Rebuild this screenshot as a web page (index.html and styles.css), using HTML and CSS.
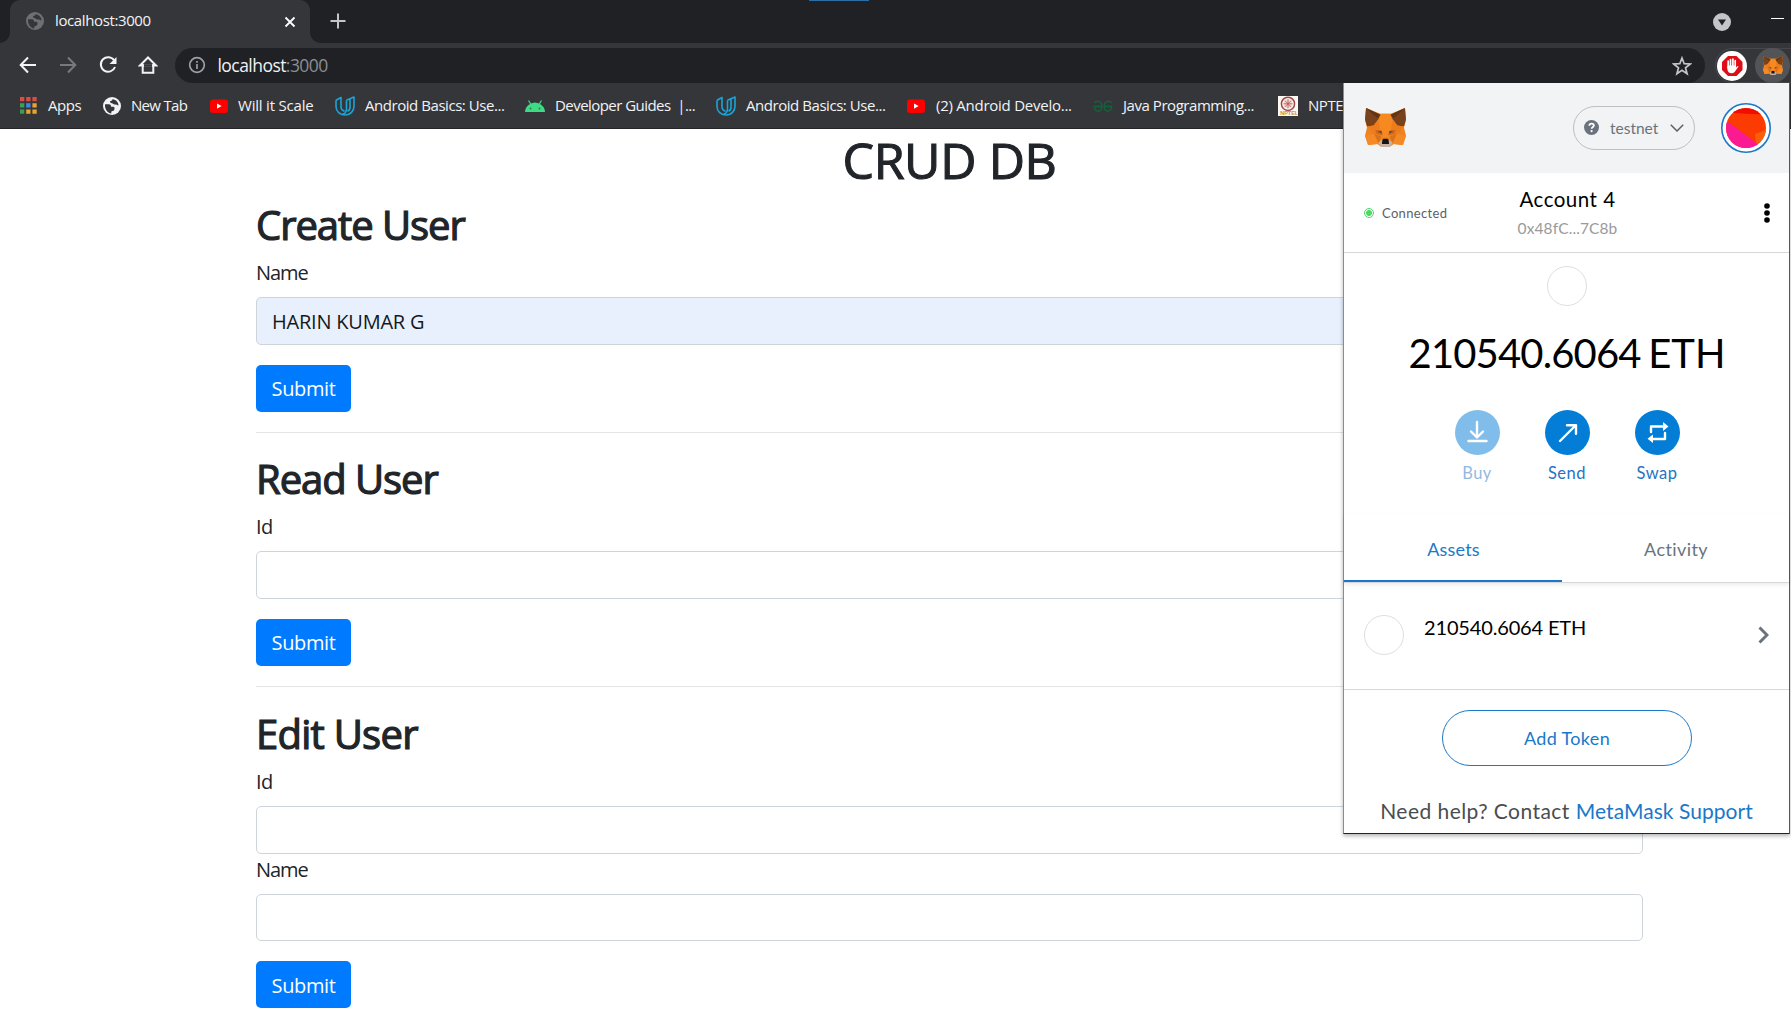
FILE: index.html
```html
<!DOCTYPE html>
<html lang="en">
<head>
<meta charset="utf-8">
<title>localhost:3000</title>
<link rel="stylesheet" href="styles.css">
</head>
<body>
<svg class="defs" aria-hidden="true">
  <symbol id="globe" viewBox="0 0 20 20">
    <circle cx="10" cy="10" r="9" fill="currentColor"/>
    <path class="globe-land" d="M3 8.3h3.7c2 .1 2.4 1.2 2.3 2.4h2.500c1 .1 1.200 1 .9 2.600-.3 1.500-1.400 1.800-2.800 2-.3.900-.400 1.500-.300 2.200C5.500 17 2.600 13.500 3 8.300zM10.500 3.200c-.4 1.500-1.500 1.600-2.500 2 .1 1.200.6 1.900 1.900 2.100 1 .3 2 1.400 3.300 1.300 1.200-.1 1.800.7 3.300.8-.1-2.900-2.100-5.900-6-6.200z"/>
  </symbol>
  <symbol id="youtube" viewBox="0 0 20 20">
    <rect x="1" y="3.500" width="18" height="13.500" rx="3" fill="#f00"/>
    <path d="M8 7.500v5.200l4.600-2.600z" fill="#fff"/>
  </symbol>
  <symbol id="udacity" viewBox="0 0 20 20">
    <path d="M1 4.300 6 1.500v9c0 2.500 1.300 4 3.600 4.700M11.500 4.300 19 1v9c0 5-3.700 9-8.500 9C5 19 1 15.500 1 10.500V4.300M11.500 4.300v8.500c0 3-1.500 5.500-4 5.300M15 2.800v8.500c0 2-.8 3.300-2.500 4" fill="none" stroke="#1aa5d8" stroke-width="1.600" stroke-linejoin="round"/>
  </symbol>
  <symbol id="fox" viewBox="0 0 40 38">
    <path d="M1 0 15 5.500h10L39 0l1 12-2 7 2 8-3 9-9-1-4 3h-8l-4-3-9 1-3-9 2-8-2-7z" fill="#ee8420"/>
    <path d="M15 5.500h10l3 12-4 11h-8l-4-11z" fill="#f6891f"/>
    <path d="M1 0 15 6.500 13 11 8.500 17 2 18 0 11zM39 0 25 6.500 27 11l4.500 6 6.500 1 2-7z" fill="#7a421b"/>
    <path d="M1 0 15 6.500 12 10zM39 0 25 6.500 28 10z" fill="#5f3418"/>
    <path d="M8.500 17 13 11l3 17-7-2-7-8zM31.500 17 27 11l-3 17 7-2 7-8z" fill="#ed7c1d"/>
    <path d="M0 27 9 25l4 9-1 1-9 1zM40 27l-9-2-4 9 1 1 9 1z" fill="#f58a24"/>
    <path d="m9 25 7 3-3 6zM31 25l-7 3 3 6z" fill="#dc711c"/>
    <path d="M10 21.500l6 .5 1.500 4.500-6-1.500zM30 21.500l-6 .5-1.500 4.500 6-1.500z" fill="#c9691f"/>
    <path d="m12.500 23 3.500-.5.500 2.300zM27.500 23l-3.500-.5-.5 2.300z" fill="#4b4743"/>
    <path d="m13 34 4-3.500h6l4 3.500-3 4h-8z" fill="#c5b3a6"/>
    <path d="m17 31 1-1h4l1 1 .5 4h-7z" fill="#161616"/>
  </symbol>
</svg>

<header class="browser">
  <div class="tabstrip">
    <div class="tab">
      <svg class="tab-icon"><use href="#globe"/></svg>
      <span class="tab-title">localhost:3000</span>
      <svg class="tab-close" viewBox="0 0 12 12"><path d="M1.500 1.500l9 9m0-9l-9 9"/></svg>
    </div>
    <svg class="new-tab" viewBox="0 0 16 16"><path d="M8 .5v15M.5 8h15"/></svg>
    <span class="screen-mark"></span>
    <svg class="tab-search" viewBox="0 0 18 18"><circle cx="9" cy="9" r="9" fill="#c4c5c8"/><path d="M5 6.500h8L9 12.500z" fill="#202124"/></svg>
    <span class="minimize"></span>
  </div>
  <div class="toolbar">
    <svg class="nav" viewBox="0 0 20 20"><path d="M18 10H3m7-7.500L2.700 10l7.300 7.500"/></svg>
    <svg class="nav nav-off" viewBox="0 0 20 20"><path d="M2 10h15m-7-7.500 7.300 7.500-7.300 7.500"/></svg>
    <svg class="nav" viewBox="0 0 20 20"><path d="M16.300 5.500A7.300 7.300 0 1 0 17 12"/><path class="solid" d="M18.500 2v7h-7z"/></svg>
    <svg class="nav" viewBox="0 0 20 20"><path d="M4.700 9v8.700h10.600V9M2 10.500l8-8 8 8z"/><path class="home-gap" d="M6 10.500h8"/></svg>
    <div class="address">
      <svg class="info" viewBox="0 0 18 18"><circle cx="9" cy="9" r="7.300"/><path d="M9 8v5M9 5v1.700"/></svg>
      <span class="url">localhost<span class="port">:3000</span></span>
      <svg class="star" viewBox="0 0 20 20"><path d="m10 2 2.200 5.700 6 .3-4.700 3.800 1.600 5.900-5.100-3.400-5.100 3.400 1.600-5.900L1.800 8l6-.3z"/></svg>
    </div>
    <div class="extensions">
      <svg class="adblock" viewBox="0 0 30 30"><circle cx="15" cy="15" r="15" fill="#fff"/><path d="M11 5h8.500l6 6v8l-6 6H11l-6-6v-8z" fill="#df0d15"/><path d="M11.200 10v7M13.500 8.500v8M15.900 8v8M18.200 9.500v8" stroke="#fff" stroke-width="1.700" stroke-linecap="round"/><path d="M10.400 14.500H19v2l1.500-1.500 1 .5-3.500 5q-1 1.800-3 1.800c-3 0-4.600-1.500-4.600-4.300z" fill="#fff"/></svg>
      <span class="fox-button"><svg class="fox-small"><use href="#fox"/></svg></span>
    </div>
  </div>
  <nav class="bookmarks">
    <a class="bookmark apps"><svg class="bm-icon" viewBox="0 0 20 20"><path fill="#dc4c40" d="M0 1h4.300v4.300H0zM6.200 1h4.300v4.300H6.200zM12.400 1h4.300v4.300h-4.300z"/><path fill="#3c9d57" d="M0 7.200h4.300v4.300H0z"/><path fill="#4187e8" d="M6.200 7.200h4.300v4.300H6.200z"/><path fill="#e9a52b" d="M12.400 7.200h4.300v4.300h-4.300zM6.200 13.400h4.300v4.300H6.200zM12.400 13.400h4.300v4.300h-4.300z"/><path fill="#3c9d57" d="M0 13.400h4.300v4.300H0z"/></svg><span>Apps</span></a>
    <a class="bookmark newtab"><svg class="bm-icon"><use href="#globe"/></svg><span>New Tab</span></a>
    <a class="bookmark will"><svg class="bm-icon"><use href="#youtube"/></svg><span>Will it Scale</span></a>
    <a class="bookmark"><svg class="bm-icon"><use href="#udacity"/></svg><span>Android Basics: Use...</span></a>
    <a class="bookmark guides"><svg class="bm-icon" viewBox="0 0 20 20"><path d="M0 16C.3 11.500 3 7.500 10 6.500c7 1 9.700 5 10 9.500z" fill="#3ddc84"/><path d="m3.500 4.500 2.500 4m10.500-4-2.500 4" stroke="#3ddc84" stroke-width="1.200"/><circle cx="5.500" cy="12.500" r="1" fill="#2f7a54"/><circle cx="14.500" cy="12.500" r="1" fill="#2f7a54"/></svg><span>Developer Guides&nbsp; |...</span></a>
    <a class="bookmark"><svg class="bm-icon"><use href="#udacity"/></svg><span>Android Basics: Use...</span></a>
    <a class="bookmark develo"><svg class="bm-icon"><use href="#youtube"/></svg><span>(2) Android Develo...</span></a>
    <a class="bookmark"><svg class="bm-icon" viewBox="0 0 20 20"><path d="M1.500 7C3 4.500 8.800 4 8.800 10.500S2 16.500 1.200 10.500H8.800M18.500 7C17 4.500 11.200 4 11.200 10.500s6.800 6 7.600 0H11.200" fill="none" stroke="#12633c" stroke-width="1.500"/></svg><span>Java Programming...</span></a>
    <a class="bookmark"><svg class="bm-icon" viewBox="0 0 20 20"><path fill="#fbf7f2" d="M0 0h20v20H0z"/><circle cx="10" cy="7.800" r="6.600" fill="none" stroke="#a4474a" stroke-width="1.500"/><circle cx="10" cy="7.800" r="4.500" fill="#f1d9d0"/><path d="M10 3.300v9M5.500 7.800h9M6.800 4.600l6.400 6.400m0-6.400L6.800 11" stroke="#b0525c" stroke-width=".8"/><text class="nptel" x="2.200" y="19">NPTEL</text></svg><span>NPTEL</span></a>
  </nav>
</header>

<main class="page">
  <div class="container">
    <h1>CRUD DB</h1>
    <section>
      <h2>Create User</h2>
      <form>
        <label class="name">Name</label>
        <div class="field filled">HARIN KUMAR G</div>
        <button class="submit" type="button">Submit</button>
      </form>
    </section>
    <hr>
    <section>
      <h2>Read User</h2>
      <form>
        <label>Id</label>
        <div class="field"></div>
        <button class="submit" type="button">Submit</button>
      </form>
    </section>
    <hr class="last">
    <section>
      <h2 class="edit">Edit User</h2>
      <form>
        <label>Id</label>
        <div class="field"></div>
        <label class="name">Name</label>
        <div class="field"></div>
        <button class="submit" type="button">Submit</button>
      </form>
    </section>
  </div>
</main>

<aside class="wallet">
  <div class="wallet-head">
    <svg class="fox-logo"><use href="#fox"/></svg>
    <div class="network">
      <svg class="question" viewBox="0 0 16 16"><circle cx="8" cy="8" r="8" fill="#6a737d"/><path d="M5.700 6.100c0-3 4.800-3 4.800-.2 0 1.700-2.300 1.500-2.300 3.400" fill="none" stroke="#fff" stroke-width="1.900"/><circle cx="8.100" cy="11.800" r="1.200" fill="#fff"/></svg>
      <span class="network-name">testnet</span>
      <svg class="caret" viewBox="0 0 14 8"><path d="m.8.800 6.200 6.200L13.200.800"/></svg>
    </div>
    <svg class="avatar" viewBox="0 0 50 50">
      <clipPath id="face"><circle cx="25" cy="25" r="20"/></clipPath>
      <circle cx="25" cy="25" r="24.200" fill="#fff" stroke="#1b78c8" stroke-width="1.600"/>
      <g clip-path="url(#face)"><path fill="#fb3b02" d="M0 0h50v50H0z"/><path fill="#f20c02" d="M0 0h50v12L12 10z"/><path fill="#f95f0a" d="m34 31 16-6v25H36z"/><path fill="#fb1a92" d="m0 16 10 5 28 21-4 8H0z"/></g>
    </svg>
  </div>
  <div class="account-row">
    <div class="connected"><span class="dot"></span><span>Connected</span></div>
    <div class="account"><div class="account-name">Account 4</div><div class="account-hash">0x48fC...7C8b</div></div>
    <svg class="kebab" viewBox="0 0 6 20"><circle cx="3" cy="3" r="2.800"/><circle cx="3" cy="10" r="2.800"/><circle cx="3" cy="17" r="2.800"/></svg>
  </div>
  <div class="overview">
    <span class="token-ring"></span>
    <div class="balance"><span class="amount">210540.6064</span><span class="unit">ETH</span></div>
    <div class="actions">
      <div class="action buy"><svg viewBox="0 0 45 45"><circle cx="22.500" cy="22.500" r="22.500"/><path d="M22 12v15m-6-5.500 6 6 6-6M13.500 31h18"/></svg><span>Buy</span></div>
      <div class="action"><svg viewBox="0 0 45 45"><circle cx="22.500" cy="22.500" r="22.500"/><path d="m15 31 15.500-15.500M22 15.200h9v8.500"/></svg><span>Send</span></div>
      <div class="action"><svg viewBox="0 0 45 45"><circle cx="22.500" cy="22.500" r="22.500"/><path class="swap" d="M16 22v-5.500h13M30 23v6H16.500"/><path class="heads" d="m28 12 5.500 4.500L28 21zM18 24.500v8.500l-5.500-4.200z"/></svg><span>Swap</span></div>
    </div>
  </div>
  <div class="wallet-tabs"><div class="wtab active">Assets</div><div class="wtab">Activity</div></div>
  <div class="asset">
    <span class="token-ring"></span><span class="asset-value">210540.6064 ETH</span>
    <svg class="chevron" viewBox="0 0 11 18"><path d="m1.500 1.500 7.500 7.500-7.500 7.500"/></svg>
  </div>
  <div class="wallet-foot">
    <button class="add-token" type="button">Add Token</button>
    <p class="help"><span class="ask">Need help? Contact</span><a class="support">MetaMask Support</a></p>
  </div>
</aside>
</body>
</html>
```
FILE: styles.css
```css
* { box-sizing: border-box; }
html, body { width: 1791px; height: 1027px; overflow: hidden; }
body { margin: 0; background: #fff; color: #212529; font-family: "Open Sans", "Noto Sans", sans-serif; font-size: 20px; line-height: 30px; }
svg { flex: none; display: block; }
.defs { position: absolute; width: 0; height: 0; }

/* browser frame */
.browser { height: 129px; width: 1791px; background: #35363a; border-bottom: 1px solid #242528; overflow: hidden; color: #f1f3f4; }
.tabstrip { height: 43px; background: #202124; display: flex; align-items: center; padding-left: 10px; }
.tab { position: relative; width: 300px; height: 43px; border-radius: 10px 10px 0 0; background: #35363a; display: flex; align-items: center; padding-left: 15px; }
.tab::before, .tab::after { content: ""; position: absolute; bottom: 0; width: 10px; height: 10px; }
.tab::before { left: -10px; background: radial-gradient(circle at 0 0, #202124 9.500px, #35363a 10px); }
.tab::after { right: -10px; background: radial-gradient(circle at 100% 0, #202124 9.500px, #35363a 10px); }
.tab-icon { width: 20px; height: 20px; color: #6d6f73; margin-top: -1px; }
.globe-land { fill: #35363a; }
.tab-title { font-size: 15px; line-height: 20px; letter-spacing: -.38px; margin: -3px 0 0 10px; width: 229px; }
.tab-close { width: 12px; height: 12px; stroke: #fff; stroke-width: 1.800; }
.new-tab { width: 16px; height: 16px; margin: -1px 0 0 19.500px; stroke: #c4c5c8; stroke-width: 2; }
.screen-mark { width: 60px; height: 1px; background: #2a6ea5; align-self: flex-start; margin-left: 463.500px; }
.tab-search { width: 18px; height: 18px; margin-left: 844px; }
.minimize { width: 13px; height: 1px; background: #fff; margin: -6px 0 0 40px; }
.toolbar { height: 44px; display: flex; align-items: flex-start; padding: 5px 0 0 18px; }
.nav { width: 20px; height: 20px; margin: 7px 20px 0 0; fill: none; stroke: #f1f3f4; stroke-width: 2; }
.nav-off { stroke: #77797d; }
.solid { fill: #f1f3f4; stroke: none; }
.home-gap { stroke: #35363a; stroke-width: 2.500; }
.address { flex: none; width: 1530px; height: 35px; border-radius: 18px; background: #202124; display: flex; align-items: center; margin-left: -3px; padding: 0 13px 0 13px; }
.info { width: 18px; height: 18px; margin-top: -1px; fill: none; stroke: #9aa0a6; stroke-width: 1.700; }
.url { flex: 1; font-size: 17.500px; letter-spacing: -.55px; margin: -2px 0 0 11.500px; }
.port { color: #8b8e92; }
.star { width: 20px; height: 20px; fill: none; stroke: #c4c5c8; stroke-width: 1.700; }
.extensions { height: 35px; width: 76px; margin-left: 10px; border: 1px solid #46474b; border-right: 0; border-radius: 18px 0 0 18px; display: flex; align-items: center; }
.adblock { width: 30px; height: 30px; margin-left: 1px; }
.fox-button { width: 35px; height: 35px; border-radius: 50%; background: #535458; margin-left: 8px; display: flex; align-items: center; justify-content: center; flex: none; }
.fox-small { width: 20px; height: 19px; }
.bookmarks { display: grid; grid-template-columns: 82px 107px 126px 190px 191px 190px 187px 185px 80px; width: 1343px; overflow: hidden; height: 37px; padding-left: 20px; align-items: center; font-size: 15px; line-height: 20px; letter-spacing: -.45px; white-space: nowrap; }
.bookmark { display: flex; align-items: center; gap: 10px; }
.bookmark span { margin-top: -2px; }
.bm-icon { width: 20px; height: 20px; }
.apps { gap: 8px; }
.newtab { letter-spacing: -.7px; gap: 9px; }
.will { letter-spacing: -.2px; gap: 9px; }
.guides { letter-spacing: -.55px; }
.develo { letter-spacing: -.25px; }
.nptel { font: 700 5.500px "Liberation Sans", sans-serif; letter-spacing: 0; fill: #d98c2c; }

/* page */
.container { width: 1387px; margin-left: 256px; }
h1, h2 { font-weight: 500; line-height: 1.2; margin: 0 0 10px; }
h1 { font-size: 50px; letter-spacing: -.4px; text-align: center; padding-top: 1px; height: 60px; -webkit-text-stroke: 1.100px; }
h2 { font-size: 40px; letter-spacing: -1.050px; padding-top: 2px; height: 48px; -webkit-text-stroke: 1.200px; }
.edit { letter-spacing: -.75px; }
form { display: flex; flex-direction: column; align-items: flex-start; }
label { display: block; height: 30px; padding-top: 1px; margin-bottom: 10px; letter-spacing: -.6px; }
.name { letter-spacing: -1.100px; }
.field { width: 100%; height: 47.500px; border: 1px solid #ced4da; border-radius: 5px; padding: 9px 15px; background: #fff; }
.filled { background: #e8f0fe; color: #15181b; letter-spacing: -.22px; }
.submit { margin: 20px 0 0; width: 95px; height: 47px; border: 0; border-radius: 5px; background: #007bff; color: #fff; font: 20px/30px "Open Sans", sans-serif; letter-spacing: -.4px; padding: 2px 0 0; }
hr { border: 0; border-top: 1px solid #e4e4e4; margin: 20px 0 20.500px; }
.last { margin-bottom: 21.500px; }

/* wallet popup */
.wallet { position: absolute; left: 1343px; top: 83px; width: 447px; height: 751px; background: #fff; border-left: 1px solid #8c8c8c; border-right: 1px solid #55585b; border-bottom: 1px solid #222; box-shadow: 0 2px 4px rgba(0,0,0,.3); font-family: Lato, sans-serif; color: #000; display: flex; flex-direction: column; }
.wallet-head { height: 90px; background: #f2f3f4; display: flex; align-items: center; padding-left: 21px; }
.fox-logo { width: 41px; height: 39px; margin-top: -1px; }
.network { margin: -1px 0 0 167px; width: 122px; height: 44px; border: 1px solid #bbc0c5; border-radius: 22px; display: flex; align-items: center; padding-left: 10px; }
.question { width: 15px; height: 15px; }
.network-name { font-size: 15.500px; letter-spacing: 0; color: #6a737d; margin-left: 11px; width: 50px; }
.caret { width: 14px; height: 8px; margin-left: 9.500px; fill: none; stroke: #5b6167; stroke-width: 1.500; }
.avatar { width: 50px; height: 50px; margin-left: 25.500px; }
.account-row { height: 80px; border-bottom: 1px solid #d6d9dc; display: flex; align-items: center; padding: 0 19px 0 20px; }
.connected { width: 110px; display: flex; align-items: center; gap: 8px; font-size: 13px; letter-spacing: .35px; color: #5b6167; }
.dot { width: 10px; height: 10px; border: 1px solid #4cd964; border-radius: 50%; background: radial-gradient(circle, #4cd964 2.700px, #fff 3.200px); }
.account { width: 187px; text-align: center; padding-top: 3px; }
.account-name { font-size: 20.500px; line-height: 28px; letter-spacing: .5px; }
.account-hash { font-size: 15.500px; line-height: 31px; letter-spacing: .1px; color: #989a9b; }
.kebab { width: 6px; height: 20px; margin-left: auto; }
.overview { height: 261px; display: flex; flex-direction: column; align-items: center; padding: 13px 0 0 1px; }
.token-ring { width: 40px; height: 40px; border: 1px solid #dcdfe2; border-radius: 50%; flex: none; }
.balance { display: flex; gap: 7.500px; font-size: 40px; line-height: 50px; margin-top: 22px; }
.amount { letter-spacing: -.85px; }
.actions { display: flex; gap: 45px; margin-top: 32px; }
.action { width: 45px; display: flex; flex-direction: column; align-items: center; font-size: 16.500px; line-height: 20px; letter-spacing: .5px; color: #2474c4; gap: 8px; }
.action svg { width: 45px; height: 45px; }
.action circle { fill: #037dd6; }
.action path { fill: none; stroke: #fff; stroke-width: 2.400; stroke-linecap: round; stroke-linejoin: round; }
.action .heads { fill: #fff; stroke: none; }
.buy { opacity: .5; }
.wallet-tabs { height: 69px; display: flex; border-bottom: 1px solid #d6d9dc; box-shadow: 0 2px 4px rgba(0,0,0,.08); }
.wtab { flex: 1; text-align: center; font-size: 18px; line-height: 24px; padding: 23px 0 0 1px; letter-spacing: .4px; color: #6a737d; }
.active { flex: 0 0 218px; height: 68px; color: #1b78c8; border-bottom: 2px solid #1b78c8; letter-spacing: .2px; }
.asset { height: 107px; border-bottom: 1px solid #d6d9dc; display: flex; align-items: flex-start; padding: 32px 20px 0 20px; }
.asset-value { font-size: 20px; line-height: 26px; letter-spacing: -.16px; margin: -1px 0 0 20px; }
.chevron { width: 11px; height: 18px; margin: 11px 0 0 auto; fill: none; stroke: #6a737d; stroke-width: 3; }
.wallet-foot { flex: 1; display: flex; flex-direction: column; align-items: center; padding-top: 20px; }
.add-token { width: 250px; height: 56px; border: 1px solid #1b78c8; border-radius: 28px; background: #fff; color: #1b78c8; font: 18px/24px Lato, sans-serif; letter-spacing: .35px; padding: 0 0 0 1px; }
.help { margin: 30px 0 0; display: flex; gap: 6px; font-size: 21px; line-height: 30px; color: #4a4d50; white-space: nowrap; }
.ask { letter-spacing: .45px; }
.support { color: #1b78c8; letter-spacing: .05px; }
```
